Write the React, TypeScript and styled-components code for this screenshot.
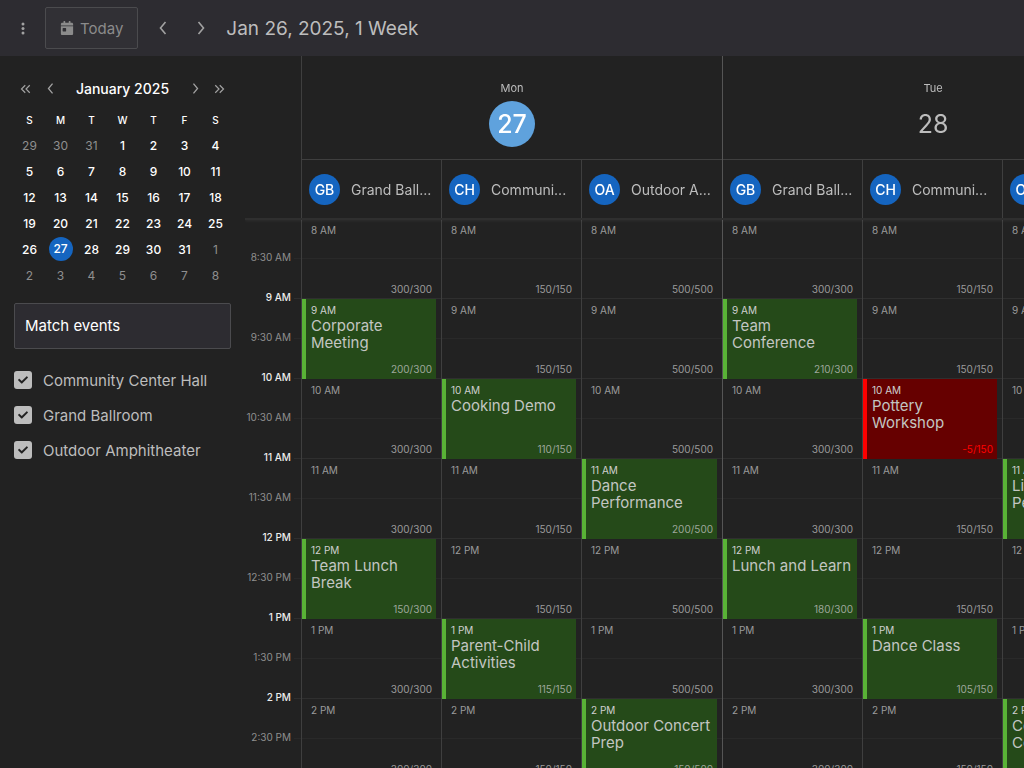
import React from "react";
import styled, { createGlobalStyle, css } from "styled-components";
import { FaCalendarDay, FaCheck } from "react-icons/fa";

const GlobalStyle = createGlobalStyle`
  *, *::before, *::after { box-sizing: border-box; }
  body {
    margin: 0;
    background: #222222;
    color: #bdbdbd;
    font-family: Inter, "Liberation Sans", sans-serif;
    font-size: 15px;
  }
  button, input { font: inherit; color: inherit; }
`;

const Page = styled.div`
  display: flex;
  flex-direction: column;
  height: 100vh;
  overflow: hidden;
`;

const Toolbar = styled.header`
  display: flex;
  align-items: center;
  flex: none;
  height: 56px;
  padding-left: 14px;
  background: #2d2c31;
`;

const IconButton = styled.button<{ $width: number }>`
  display: flex;
  align-items: center;
  justify-content: center;
  flex: none;
  width: ${(p) => p.$width}px;
  height: 32px;
  padding: 0;
  border: 0;
  background: none;
  color: #a2a2a2;
`;

const TodayButton = styled.button`
  display: flex;
  align-items: center;
  gap: 6px;
  height: 42px;
  margin: 0 6px 0 14px;
  padding: 0 14px;
  border: 1px solid #4b4b4e;
  border-radius: 2px;
  background: #313035;
  color: #8b8b8b;
`;

const RangeTitle = styled.h1`
  margin: 0 0 0 6px;
  font-size: 19px;
  font-weight: 400;
  color: #bdbdbd;
  white-space: nowrap;
`;

const Body = styled.div`
  display: flex;
  flex: 1;
  min-height: 0;
`;

const Sidebar = styled.aside`
  flex: none;
  width: 245px;
  padding: 20px 14px 0;
`;

const PickerHeader = styled.div`
  display: flex;
  align-items: center;
  height: 25px;
`;

const PickerTitle = styled.h2`
  flex: 1;
  margin: 0;
  text-align: center;
  font-size: 14px;
  font-weight: 500;
  color: #ffffff;
`;

const PickerTable = styled.table`
  width: 100%;
  margin-top: 7px;
  border-collapse: collapse;
  table-layout: fixed;
  text-align: center;
  color: #ffffff;
  font-size: 12px;
  font-weight: 500;
`;

const PickerWeekday = styled.th`
  height: 24px;
  padding: 0;
  font-size: 10px;
  font-weight: 500;
`;

const PickerCell = styled.td<{ $muted: boolean }>`
  height: 26px;
  padding: 0;
  ${(p) => p.$muted && css`color: #8f8f8f; font-weight: 400;`}
`;

const SelectedDay = styled.span`
  display: block;
  width: 24px;
  margin: 0 auto;
  border-radius: 50%;
  background: #1565c0;
  line-height: 24px;
`;

const FilterInput = styled.input`
  display: block;
  width: 100%;
  height: 46px;
  margin: 15px 0 21px;
  padding: 0 10px 2px;
  border: 1px solid #4b4b4e;
  border-radius: 2px;
  outline: 0;
  background: #2d2c31;
  color: #ffffff;
  &::placeholder { color: #ffffff; opacity: 1; }
`;

const CheckList = styled.div`
  display: flex;
  flex-direction: column;
  gap: 15px;
`;

const CheckLabel = styled.label`
  display: flex;
  align-items: center;
  gap: 11px;
  height: 20px;
`;

const CheckBox = styled.span`
  display: grid;
  place-items: center;
  width: 18px;
  height: 18px;
  > * { grid-area: 1 / 1; }
  svg { color: #222222; pointer-events: none; }
`;

const CheckInput = styled.input`
  appearance: none;
  width: 18px;
  height: 18px;
  margin: 0;
  border-radius: 3px;
  background: #bdbdbd;
`;

const Scheduler = styled.main`
  flex: 1;
  min-width: 0;
  overflow: auto;
  scrollbar-width: none;
`;

const SchedulerContent = styled.div`
  min-width: 899px;
`;

const HeaderRow = styled.div`
  position: sticky;
  top: 0;
  z-index: 1;
  display: flex;
  height: 164px;
  margin-bottom: -1px;
  border-bottom: 2px solid #2f2f2f;
  background: #222222;
  box-shadow: 0 1px 3px rgba(255, 255, 255, 0.06);
`;

const GridRow = styled.div`
  display: flex;
`;

const AxisCorner = styled.div`
  flex: none;
  width: 57px;
  border-right: 1px solid #3f3f3f;
`;

const TimeTick = styled.div<{ $major: boolean }>`
  display: flex;
  align-items: flex-end;
  justify-content: flex-end;
  height: 40px;
  padding-right: 10px;
  background: linear-gradient(${(p) => (p.$major ? "#2f2f2f, #2f2f2f" : "#292929, #292929")}) right bottom / 7px 1px no-repeat;
  color: ${(p) => (p.$major ? "#ededed" : "#8f8f8f")};
  font-size: 10px;
  font-weight: ${(p) => (p.$major ? 500 : 400)};
  line-height: 14px;
  white-space: nowrap;
  span { margin-bottom: -5px; }
`;

const Day = styled.section`
  display: flex;
  flex-direction: column;
  flex: 1 0 421px;
  min-width: 0;
  border-right: 1px solid #555555;
`;

const DayHeading = styled.div`
  display: flex;
  flex-direction: column;
  align-items: center;
  height: 104px;
  padding-top: 24px;
  border-bottom: 1px solid #3f3f3f;
`;

const DayName = styled.span`
  font-size: 11px;
  line-height: 16px;
`;

const DayNumber = styled.span<{ $today: boolean }>`
  width: 46px;
  margin-top: 5px;
  border-radius: 50%;
  background: ${(p) => (p.$today ? "#5fa2dd" : "none")};
  color: ${(p) => (p.$today ? "#ffffff" : "#bdbdbd")};
  font-size: 25px;
  font-weight: ${(p) => (p.$today ? 500 : 400)};
  line-height: 46px;
  text-align: center;
`;

const Columns = styled.div`
  display: grid;
  grid-template-columns: repeat(3, minmax(0, 1fr));
  flex: 1;
`;

const ResourceHeader = styled.div`
  display: flex;
  align-items: center;
  gap: 11px;
  min-width: 0;
  padding: 0 7px;
  border-right: 1px solid #3f3f3f;
  font-size: 14px;
  &:last-child { border-right: 0; }
`;

const Avatar = styled.span`
  flex: none;
  width: 31px;
  border-radius: 50%;
  background: #1565c0;
  color: #ffffff;
  font-weight: 500;
  line-height: 31px;
  text-align: center;
`;

const ResourceName = styled.span`
  white-space: nowrap;
`;

const Column = styled.div`
  min-width: 0;
  border-right: 1px solid #3f3f3f;
  &:last-child { border-right: 0; }
`;

const Hour = styled.div`
  height: 80px;
  padding-right: 5px;
  background:
    linear-gradient(#2f2f2f, #2f2f2f) left bottom / 100% 1px no-repeat,
    linear-gradient(#292929, #292929) left 39px / 100% 1px no-repeat;
`;

type Tone = "free" | "booked" | "over";

const tones = {
  free: { bar: "transparent", fill: "transparent", time: "#9b9b9b", count: "#9b9b9b" },
  booked: { bar: "#59b336", fill: "#254a19", time: "#d0d0d0", count: "#9ea79b" },
  over: { bar: "#ff0000", fill: "#660000", time: "#d0d0d0", count: "#ff0000" },
};

const Slot = styled.article<{ $tone: Tone }>`
  display: flex;
  flex-direction: column;
  height: 80px;
  padding: 5px 4px 3px 5px;
  border-left: 4px solid ${(p) => tones[p.$tone].bar};
  background: ${(p) => tones[p.$tone].fill};
  background-clip: padding-box;
  color: ${(p) => tones[p.$tone].time};
`;

const SlotTime = styled.span`
  font-size: 10px;
  line-height: 13px;
`;

const SlotTitle = styled.span`
  color: #c3c6c2;
  line-height: 17px;
`;

const SlotCount = styled.span<{ $tone: Tone }>`
  margin-top: auto;
  color: ${(p) => tones[p.$tone].count};
  font-size: 10px;
  line-height: 14px;
  text-align: right;
`;

const arrows = {
  left: "M8.5 2 3.5 8l5 6",
  right: "M3.5 2l5 6-5 6",
  doubleLeft: "M7 3 2 8l5 5M13 3 8 8l5 5",
  doubleRight: "M3 3l5 5-5 5M9 3l5 5-5 5",
};

const Arrow = ({ kind, size }: { kind: keyof typeof arrows; size: number }) => (
  <svg
    width={size}
    height={size}
    viewBox={kind === "left" || kind === "right" ? "-2 0 16 16" : "0 0 16 16"}
    fill="none"
    stroke="currentColor"
    strokeWidth="1.6"
    aria-hidden="true"
  >
    <path d={arrows[kind]} />
  </svg>
);

const weekdays = ["S", "M", "T", "W", "T", "F", "S"];
const weeks = Array.from({ length: 6 }, (_, week) =>
  Array.from({ length: 7 }, (_, day) => new Date(2024, 11, 29 + week * 7 + day)),
);

const resources = [
  { name: "Grand Ballroom", short: "Grand Ball...", initials: "GB", capacity: 300 },
  { name: "Community Center Hall", short: "Communi...", initials: "CH", capacity: 150 },
  { name: "Outdoor Amphitheater", short: "Outdoor A...", initials: "OA", capacity: 500 },
];

type Booking = { title: string; left: number };

const days: { name: string; date: number; bookings: Record<string, Booking> }[] = [
  {
    name: "Mon",
    date: 27,
    bookings: {
      "GB-9": { title: "Corporate Meeting", left: 200 },
      "CH-10": { title: "Cooking Demo", left: 110 },
      "OA-11": { title: "Dance Performance", left: 200 },
      "GB-12": { title: "Team Lunch Break", left: 150 },
      "CH-13": { title: "Parent-Child Activities", left: 115 },
      "OA-14": { title: "Outdoor Concert Prep", left: 150 },
    },
  },
  {
    name: "Tue",
    date: 28,
    bookings: {
      "GB-9": { title: "Team Conference", left: 210 },
      "CH-10": { title: "Pottery Workshop", left: -5 },
      "OA-11": { title: "Live Performance", left: 300 },
      "GB-12": { title: "Lunch and Learn", left: 180 },
      "CH-13": { title: "Dance Class", left: 105 },
      "OA-14": { title: "Community Concert", left: 200 },
    },
  },
];

const hours = [8, 9, 10, 11, 12, 13, 14];

const hourLabel = (hour: number, minutes = "") =>
  `${hour > 12 ? hour - 12 : hour}${minutes} ${hour < 12 ? "AM" : "PM"}`;

const HourSlot = ({ hour, capacity, booking }: { hour: number; capacity: number; booking?: Booking }) => {
  const tone: Tone = !booking ? "free" : booking.left < 0 ? "over" : "booked";
  return (
    <Hour>
      <Slot $tone={tone}>
        <SlotTime>{hourLabel(hour)}</SlotTime>
        {booking && <SlotTitle>{booking.title}</SlotTitle>}
        <SlotCount $tone={tone}>
          {booking ? booking.left : capacity}/{capacity}
        </SlotCount>
      </Slot>
    </Hour>
  );
};

export default function App() {
  return (
    <Page>
      <GlobalStyle />
      <Toolbar>
        <IconButton $width={17} aria-label="Menu">
          <svg width="4" height="13" viewBox="0 0 4 13" fill="currentColor" aria-hidden="true">
            <circle cx="2" cy="2" r="1.5" />
            <circle cx="2" cy="6.5" r="1.5" />
            <circle cx="2" cy="11" r="1.5" />
          </svg>
        </IconButton>
        <TodayButton>
          <FaCalendarDay size={14} />
          Today
        </TodayButton>
        <IconButton $width={38} aria-label="Previous week">
          <Arrow kind="left" size={16} />
        </IconButton>
        <IconButton $width={38} aria-label="Next week">
          <Arrow kind="right" size={16} />
        </IconButton>
        <RangeTitle>Jan 26, 2025, 1 Week</RangeTitle>
      </Toolbar>
      <Body>
        <Sidebar>
          <PickerHeader>
            <IconButton $width={24} aria-label="Previous year">
              <Arrow kind="doubleLeft" size={12} />
            </IconButton>
            <IconButton $width={24} aria-label="Previous month">
              <Arrow kind="left" size={13} />
            </IconButton>
            <PickerTitle>January 2025</PickerTitle>
            <IconButton $width={24} aria-label="Next month">
              <Arrow kind="right" size={13} />
            </IconButton>
            <IconButton $width={24} aria-label="Next year">
              <Arrow kind="doubleRight" size={12} />
            </IconButton>
          </PickerHeader>
          <PickerTable>
            <thead>
              <tr>
                {weekdays.map((day, i) => (
                  <PickerWeekday key={i}>{day}</PickerWeekday>
                ))}
              </tr>
            </thead>
            <tbody>
              {weeks.map((week, i) => (
                <tr key={i}>
                  {week.map((date) => {
                    const inMonth = date.getMonth() === 0;
                    const day = date.getDate();
                    return (
                      <PickerCell key={date.getTime()} $muted={!inMonth}>
                        {inMonth && day === 27 ? <SelectedDay>{day}</SelectedDay> : day}
                      </PickerCell>
                    );
                  })}
                </tr>
              ))}
            </tbody>
          </PickerTable>
          <FilterInput type="text" placeholder="Match events" aria-label="Match events" />
          <CheckList>
            {["Community Center Hall", "Grand Ballroom", "Outdoor Amphitheater"].map((name) => (
              <CheckLabel key={name}>
                <CheckBox>
                  <CheckInput type="checkbox" defaultChecked />
                  <FaCheck size={10} />
                </CheckBox>
                {name}
              </CheckLabel>
            ))}
          </CheckList>
        </Sidebar>
        <Scheduler>
          <SchedulerContent>
            <HeaderRow>
              <AxisCorner />
              {days.map((day) => (
                <Day key={day.date}>
                  <DayHeading>
                    <DayName>{day.name}</DayName>
                    <DayNumber $today={day.date === 27}>{day.date}</DayNumber>
                  </DayHeading>
                  <Columns>
                    {resources.map((resource) => (
                      <ResourceHeader key={resource.initials} title={resource.name}>
                        <Avatar>{resource.initials}</Avatar>
                        <ResourceName>{resource.short}</ResourceName>
                      </ResourceHeader>
                    ))}
                  </Columns>
                </Day>
              ))}
            </HeaderRow>
            <GridRow>
              <AxisCorner>
                {hours.map((hour) => (
                  <React.Fragment key={hour}>
                    <TimeTick $major={false}>
                      <span>{hourLabel(hour, ":30")}</span>
                    </TimeTick>
                    <TimeTick $major>
                      <span>{hourLabel(hour + 1)}</span>
                    </TimeTick>
                  </React.Fragment>
                ))}
              </AxisCorner>
              {days.map((day) => (
                <Day key={day.date}>
                  <Columns>
                    {resources.map((resource) => (
                      <Column key={resource.initials}>
                        {hours.map((hour) => (
                          <HourSlot
                            key={hour}
                            hour={hour}
                            capacity={resource.capacity}
                            booking={day.bookings[`${resource.initials}-${hour}`]}
                          />
                        ))}
                      </Column>
                    ))}
                  </Columns>
                </Day>
              ))}
            </GridRow>
          </SchedulerContent>
        </Scheduler>
      </Body>
    </Page>
  );
}
